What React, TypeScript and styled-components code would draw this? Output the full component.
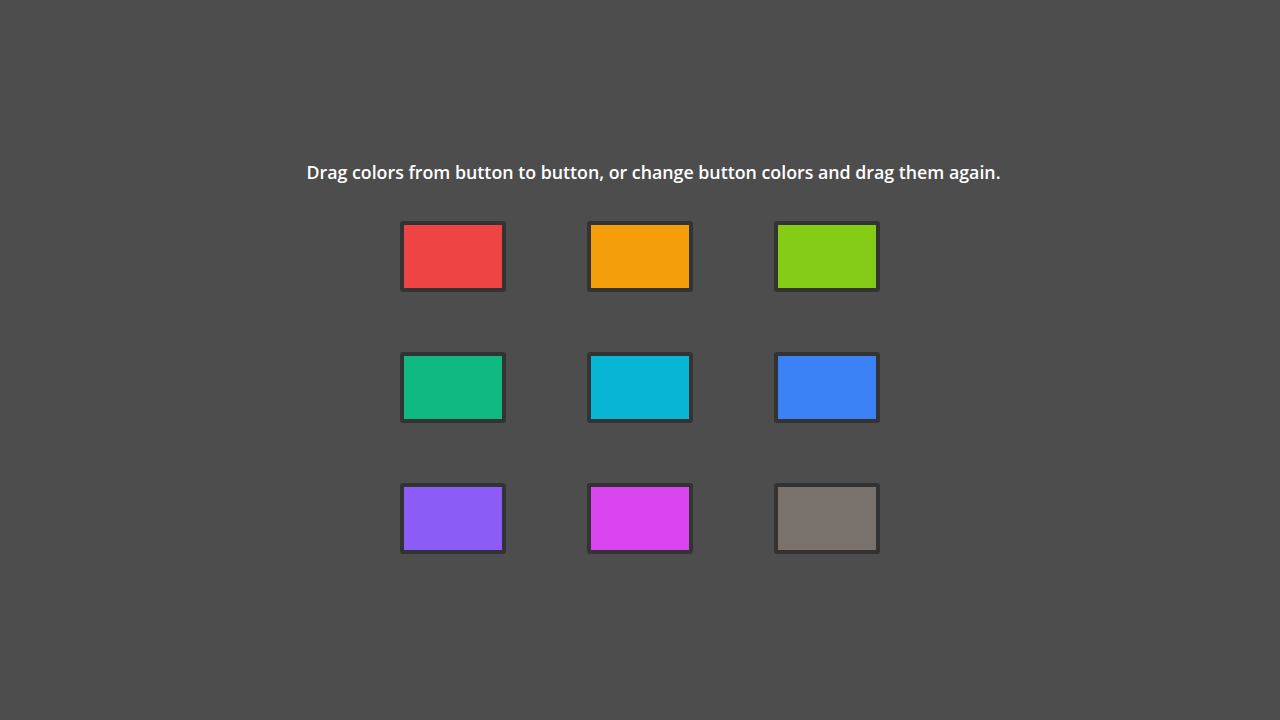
import React from "react";
import styled, { createGlobalStyle } from "styled-components";

const colors = [
  "#ef4444",
  "#f59e0b",
  "#84cc16",
  "#10b981",
  "#06b6d4",
  "#3b82f6",
  "#8b5cf6",
  "#d946ef",
  "#78716c",
];

export default function App() {
  return (
    <>
      <GlobalStyle />
      <Page>
        <Hint>Drag colors from button to button, or change button colors and drag them again.</Hint>
        <Grid>
          {colors.map((c) => (
            <ColorButton key={c} $color={c} />
          ))}
        </Grid>
      </Page>
    </>
  );
}

const GlobalStyle = createGlobalStyle`
  html, body {
    margin: 0;
    padding: 0;
    background: #4d4d4d;
  }
`;

const Page = styled.div`
  width: 1280px;
  height: 720px;
  display: flex;
  flex-direction: column;
  align-items: center;
  padding-top: 160px;
  box-sizing: border-box;
  font-family: "Open Sans", "Noto Sans", sans-serif;
`;

const Hint = styled.p`
  margin: 0;
  padding-left: 27px;
  color: #ffffff;
  font-size: 17.8px;
  font-weight: 600;
  line-height: 24px;
`;

const Grid = styled.div`
  margin-top: 37px;
  display: grid;
  grid-template-columns: repeat(3, 106px);
  grid-auto-rows: 71px;
  column-gap: 81px;
  row-gap: 60px;
`;

const ColorButton = styled.button<{ $color: string }>`
  width: 106px;
  height: 71px;
  padding: 0;
  border: 4px solid #333333;
  border-radius: 3px;
  background: ${(p) => p.$color};
  cursor: grab;
`;
